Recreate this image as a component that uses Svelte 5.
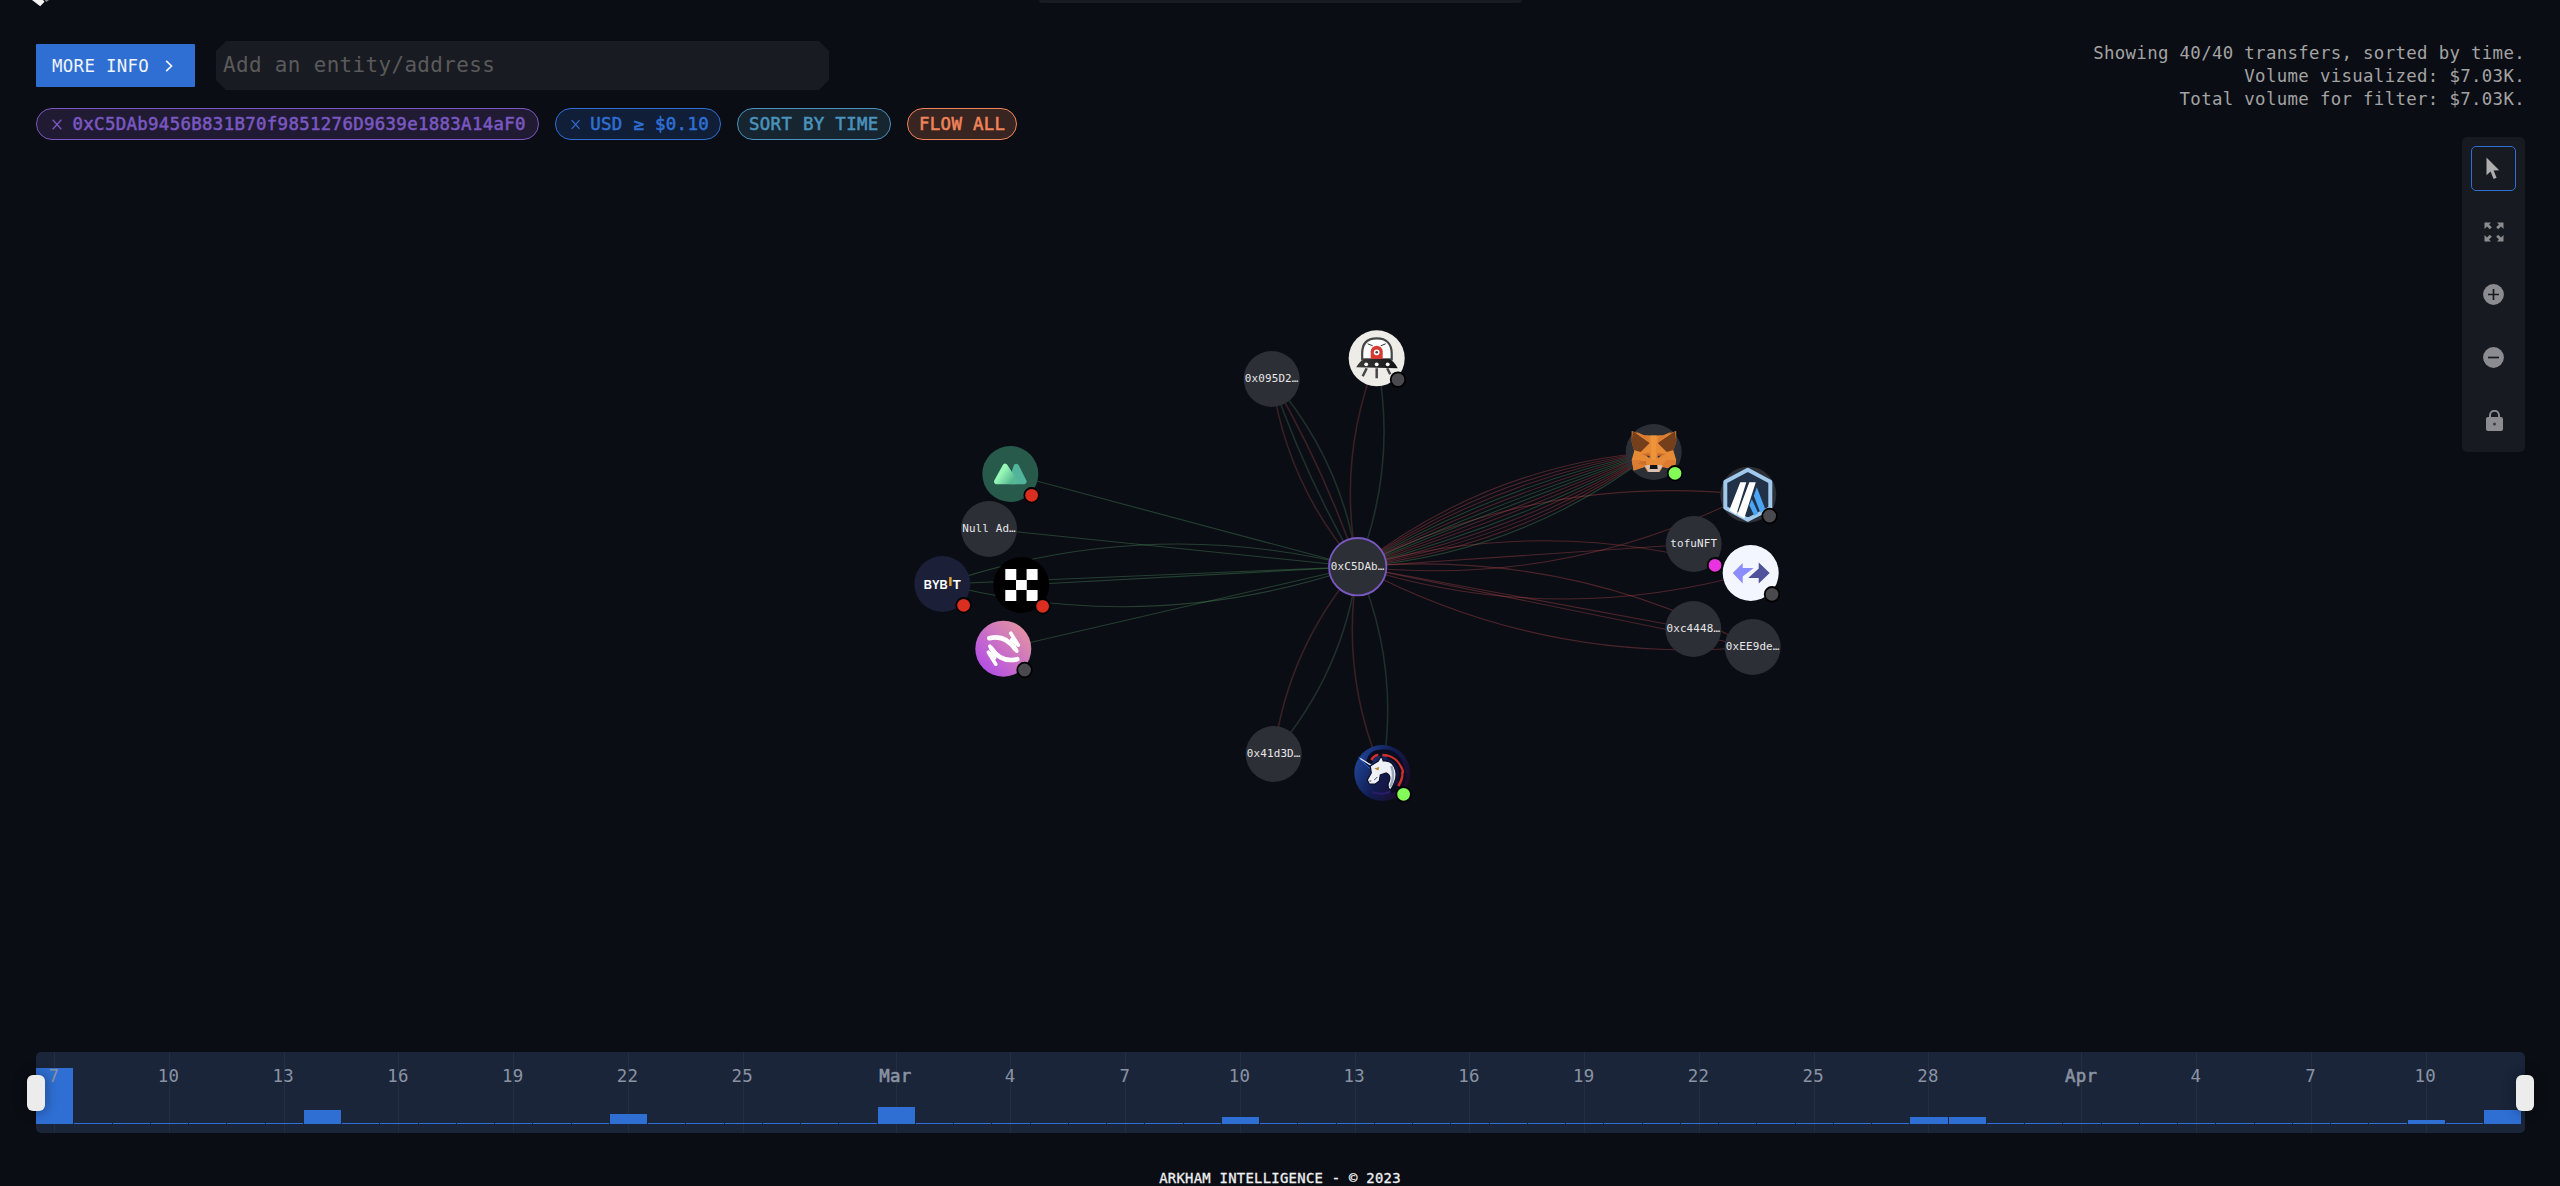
<script>
  const hub = { x: 1357.7, y: 566.7 };

  // Each edge list is ordered from one side of the fan to the other.
  const nodes = [
    { id: 'mountain', x: 1010.3, y: 474, fill: '#275a4b', edges: 'g', dot: '#d92e20' },
    { id: 'null', x: 989, y: 529, label: 'Null Ad…', edges: 'g' },
    { id: 'bybit', x: 942.3, y: 584, fill: '#1b1f38', edges: 'ggg', dot: '#d92e20' },
    { id: 'okx', x: 1021.3, y: 585, fill: '#000', edges: 'g', dot: '#d92e20' },
    { id: 'swirl', x: 1003.3, y: 648.7, fill: 'url(#swirl)', edges: 'g', dot: '#4a4a4e' },
    { id: 'a095', x: 1271.7, y: 379, label: '0x095D2…', edges: 'rgrg', steep: true },
    { id: 'ufo', x: 1376.7, y: 358.3, fill: '#edece6', edges: 'rg', steep: true, dot: '#4a4a4e' },
    { id: 'a41d', x: 1273.7, y: 754, label: '0x41d3D…', edges: 'gr', steep: true },
    { id: 'unicorn', x: 1382.3, y: 773, fill: 'url(#night)', edges: 'gr', steep: true, dot: '#83fb58' },
    { id: 'fox', x: 1653.7, y: 452, edges: 'rrrgrggrrgrrrg', dot: '#83fb58' },
    { id: 'arb', x: 1748.3, y: 494.7, edges: 'rr', dot: '#4a4a4e' },
    { id: 'tofu', x: 1693.7, y: 544, label: 'tofuNFT', edges: 'r', dot: '#ea33e0' },
    { id: 'zk', x: 1750.7, y: 573, fill: '#f3f6ff', edges: 'rr', dot: '#4a4a4e' },
    { id: 'c444', x: 1693.3, y: 629, label: '0xc4448…', edges: 'r' },
    { id: 'ee9', x: 1752.7, y: 647, label: '0xEE9de…', edges: 'rrr' }
  ];

  const BEND = 0.148;
  const edges = nodes.flatMap((n) => {
    const dx = n.x - hub.x;
    const dy = n.y - hub.y;
    const count = n.edges.length;
    return [...n.edges].map((kind, i) => {
      const k = count === 1 ? 0 : BEND * (1 - (2 * i) / (count - 1));
      const cx = hub.x + dx / 2 + dy * k;
      const cy = hub.y + dy / 2 - dx * k;
      return { kind, steep: n.steep, d: `M${hub.x} ${hub.y}Q${cx.toFixed(1)} ${cy.toFixed(1)} ${n.x} ${n.y}` };
    });
  });

  const heights = { 0: 56, 7: 14, 15: 10, 22: 17, 31: 7, 49: 7, 50: 7, 62: 4, 64: 14 };
  const labels = {
    0: '7', 3: '10', 6: '13', 9: '16', 12: '19', 15: '22', 18: '25', 22: 'Mar', 25: '4', 28: '7', 31: '10',
    34: '13', 37: '16', 40: '19', 43: '22', 46: '25', 49: '28', 53: 'Apr', 56: '4', 59: '7', 62: '10'
  };
  const days = Array.from({ length: 65 }, (_, i) => ({ h: heights[i] ?? 1, label: labels[i] }));
</script>

{#snippet cross()}
  <svg class="cross" width="10" height="11" viewBox="0 0 10 11"><path d="M.7 .7 9.3 10.3M9.3 .7.7 10.3" /></svg>
{/snippet}

<div class="page">
  <svg class="graph" width="2560" height="1186" viewBox="0 0 2560 1186">
    <defs>
      <linearGradient id="swirl" x1="0.1" y1="0.9" x2="0.85" y2="0.15">
        <stop offset="0" stop-color="#b24ce8" /><stop offset="1" stop-color="#e090a6" />
      </linearGradient>
      <linearGradient id="night" x1="0" y1="0.2" x2="1" y2="0.7">
        <stop offset="0" stop-color="#21479c" /><stop offset="0.5" stop-color="#111d52" /><stop offset="1" stop-color="#1c0a26" />
      </linearGradient>
      <linearGradient id="peak" x1="0.35" y1="0.3" x2="1" y2="0.7">
        <stop offset="0" stop-color="#96f7b6" /><stop offset="1" stop-color="#57b894" />
      </linearGradient>
      <linearGradient id="saucer"><stop offset="0" stop-color="#3b3b3b" /><stop offset="1" stop-color="#111" /></linearGradient>
    </defs>

    {#each edges as e}
      <path class="edge {e.kind}" class:steep={e.steep} d={e.d} />
    {/each}

    {#each nodes as n (n.id)}
      <g transform="translate({n.x} {n.y})">
        <circle r="28" fill={n.fill ?? '#2d2f37'} />
        {#if n.id === 'mountain'}
          <path d="M1 7.500 6 -7.500 13.500 7.500Z" fill="#52b49a" stroke="#52b49a" stroke-width="5.500" stroke-linejoin="round" />
          <path d="M-13.500 7.500-5.200-7.500 4.500 7.500Z" fill="url(#peak)" stroke="url(#peak)" stroke-width="5.500" stroke-linejoin="round" />
        {:else if n.id === 'bybit'}
          <text class="brand" x="-18.500" y="5" textLength="24" lengthAdjust="spacingAndGlyphs">BYB</text>
          <path d="M6.900-7h2.400v9h-2.400z" fill="#f0a92e" />
          <text class="brand" x="10.500" y="5" textLength="8" lengthAdjust="spacingAndGlyphs">T</text>
        {:else if n.id === 'okx'}
          <path d="M-16-16h11v11h-11zM5.300-16h11v11h-11zM-5.300-5h10.800v10h-10.800zM-16 5h11v11h-11zM5.300 5h11v11h-11z" fill="#fff" />
        {:else if n.id === 'swirl'}
          {#each [0, 180] as turn}
            <g transform="rotate({turn})">
              <path d="M-14-10.500C-4-13 5-10 12 .5" fill="none" stroke="#fff" stroke-width="4.600" stroke-linecap="round" />
              <path d="M7.500-15.500 15-3.500M11-2 13.500 2.500M8.500-9 13-5" fill="none" stroke="#fff" stroke-width="3.600" stroke-linecap="round" />
            </g>
          {/each}
        {:else if n.id === 'ufo'}
          <path d="M-14.500 1V-5C-14.500-14-10-20 0-20S15-14 15-5V1z" fill="#fff" stroke="#444648" stroke-width="2.200" />
          <path d="M-9-14.500l5 2M9-14.500l-5 2" stroke="#333" stroke-width="1" />
          <path d="M-6 1V-7a6 5.500 0 0 1 12 0V1z" fill="#d63a33" />
          <circle cy="-6" r="2.900" fill="#fff" /><circle cy="-6" r="1.300" fill="#444" />
          <path d="M-10 10-14 18M0 10V20M10.500 10 13.500 16" stroke="#454748" stroke-width="2.500" />
          <path d="M-20.500 9Q-16 1-11 .6H12Q17 2 21 10Z" fill="url(#saucer)" />
          <g fill="#fff"><circle cx="-10.500" cy="6" r="1.900" /><circle cy="6" r="1.900" /><circle cx="11" cy="6" r="1.900" /></g>
        {:else if n.id === 'unicorn'}
          <path d="M-10 19Q4 24 14 14" fill="none" stroke="#2a1d6b" stroke-width="2" />
          <path d="M-13-10Q-12-21 2-20.500T19-4Q23 6 17 13L8 18" fill="none" stroke="#0a0d20" stroke-width="6" />
          <path d="M-23.500-15.500-10-7-13-5Z" fill="#0c1330" stroke="#2f6fe0" stroke-width="1" />
          <path d="M-22-14.500-11-7.500" stroke="#e8ecf5" stroke-width="1.200" />
          <path d="M-11-13Q-8-18-4-18M0-18Q10-18 16-10T20 0Q20 7 16 13" fill="none" stroke="#cf2f2b" stroke-width="2.600" />
          <path d="M5-15.500Q18-11 18 2L16 8" fill="none" stroke="#0a0d20" stroke-width="2" />
          <path d="M-12-7-4-12-1-17 1-12Q9-13 12-6 17 4 8 17 4 14 7 8 9 2 4 0L-2 2-3 8-7 11-13 11-15 7-11 0Z" fill="#eef1f7" stroke="#0c1026" stroke-width="1.200" />
          <path d="M9-7Q13 3 8 14" fill="none" stroke="#9aa6bd" stroke-width="2.400" />
          <path d="M-8-4.500-3-6-4-2.500Z" fill="#b08a26" /><path d="M-13 8h2M-8 7l3-3" stroke="#444b60" />
        {:else if n.id === 'fox'}
          <path d="M-22-21-10-16.500H10L22.500-21 22.500-10 19.500-2 22.500 8 21 17.500 9 15 6 20H-6L-9 15-20 18.500-22 8-19.500-1-22-10Z" fill="#e68a35" />
          <path d="M-21-21-4-9-13 0-20-2-22-10ZM21.500-21 4-9 13 0 20-2 22.500-10Z" fill="#743f1a" />
          <path d="M-18-20.500-4-9-5-16.500H-9ZM18-20.500 4-9 5-16.500H9ZM-22 8-13 8-7 14-20 18.500ZM22 8 13 8 7 14 21 17.500Z" fill="#dc7c32" />
          <path d="M-12 2-4 1-3 6ZM12 2 4 1 3 6ZM-12 9-8 9-7 13-16 12Z" fill="#cd6f2d" />
          <path d="M-3-16.500H3L2 8H-2Z" fill="#ee953c" />
          <path d="M-9 13.500-4 13H4L9 13.500 5 20H-5Z" fill="#d8c2b5" />
          <path d="M-7.500 3.500-4 4-4.500 6ZM7.500 3.500 4 4 4.500 6Z" fill="#27343f" />
          <path d="M-3.500 13H3.500L4 17H-4Z" fill="#141414" />
        {:else if n.id === 'arb'}
          <path d="M-.5-25 22-13V13.500L-.5 25-23 13V-13Z" fill="#213147" stroke="#a0c9ec" stroke-width="4" stroke-linejoin="round" />
          <path d="M-8-12.500h6L-12 20-19 15.500ZM1-12.500h6.500L-4 23.500-11 20Z" fill="#fff" />
          <path d="M8.500-7.500 17 14.500 12 18 5.500 1ZM3.500 4.500 10 18.500 6 21 1 10.500Z" fill="#4aa5f5" />
        {:else if n.id === 'zk'}
          <path d="M-18 0-8-10V-5H3L-8 3.500V10.500Z" fill="#8c8dfc" />
          <path d="M19 0 8-10.500V-4.500L-2.500 5H8V10.500Z" fill="#4e529a" />
        {/if}
        {#if n.label}<text class="name" y="3.300">{n.label}</text>{/if}
        {#if n.dot}<circle cx="21.300" cy="21.300" r="7.300" fill={n.dot} stroke="#000" stroke-width="1.800" />{/if}
      </g>
    {/each}

    <g transform="translate({hub.x} {hub.y})">
      <circle r="28.700" fill="#2d2f37" stroke="#7a58c1" stroke-width="1.800" />
      <text class="name" y="3">0xC5DAb…</text>
    </g>
  </svg>

  <nav>
    <svg class="logo" width="18" height="7" viewBox="0 0 18 7"><path d="M0 0h11l1.500 1.800L8.200 6.300z" /><path d="M12.500 0H17l-2.600 2z" opacity=".55" /></svg>
    <div class="search-edge"></div>
  </nav>

  <header>
    <div class="filters">
      <div class="controls">
        <button class="more">MORE INFO<svg width="8" height="12" viewBox="0 0 8 12"><path d="M1.200 .8 6.500 6 1.200 11.200" /></svg></button>
        <div class="entity">Add an entity/address</div>
      </div>
      <div class="pills">
        <span class="pill purple">{@render cross()}0xC5DAb9456B831B70f9851276D9639e1883A14aF0</span>
        <span class="pill blue">{@render cross()}USD ≥ $0.10</span>
        <span class="pill teal">SORT BY TIME</span>
        <span class="pill orange">FLOW ALL</span>
      </div>
    </div>
    <div class="status">
      <p>Showing 40/40 transfers, sorted by time.</p>
      <p>Volume visualized: $7.03K.</p>
      <p>Total volume for filter: $7.03K.</p>
      <div class="tools">
        <button class="tool active"><svg width="14" height="23" viewBox="0 0 14 23"><path d="M.5 .5V18.200L4.600 14.600 7.600 22 10.600 20.800 7.600 13.600 13.200 13.200Z" /></svg></button>
        <button class="tool"><svg width="20" height="20" viewBox="0 0 20 20"><path d="M.5 .5H7L5 2.500 7.800 5.300 5.800 7.300 3 4.500.5 7ZM19.500 .5H13L15 2.500 12.200 5.300 14.200 7.300 17 4.500 19.500 7ZM.5 19.500H7L5 17.500 7.800 14.700 5.800 12.700 3 15.500.5 13ZM19.500 19.500H13L15 17.500 12.200 14.700 14.200 12.700 17 15.500 19.500 13Z" /></svg></button>
        <button class="tool"><svg width="21" height="21" viewBox="0 0 21 21"><circle cx="10.500" cy="10.500" r="10.400" /><path class="cut" d="M5 10.500H16M10.500 5V16" /></svg></button>
        <button class="tool"><svg width="21" height="21" viewBox="0 0 21 21"><circle cx="10.500" cy="10.500" r="10.400" /><path class="cut" d="M5 10.500H16" /></svg></button>
        <button class="tool lock"><svg width="17" height="21" viewBox="0 0 17 21"><path class="shackle" d="M4 8V5.500a4.500 4.700 0 0 1 9 0V8" /><rect y="7" width="17" height="14" rx="2" /><circle class="hole" cx="8.500" cy="14" r="1.600" /></svg></button>
      </div>
    </div>
  </header>

  <section class="timeline">
    {#each days as day}
      <div class="day" class:tick={day.label}>
        <div class="bar" style="height: {day.h}px"></div>
        {#if day.label}<span class:month={day.label.length > 2}>{day.label}</span>{/if}
      </div>
    {/each}
    <i class="handle left"></i>
    <i class="handle right"></i>
  </section>

  <footer>ARKHAM INTELLIGENCE - © 2023</footer>
</div>

<style>
  :global(body) { background: #0a0d14; overflow: hidden; }
  .page {
    position: relative; width: 2560px; height: 1186px; overflow: hidden;
    display: flex; flex-direction: column; background: #0a0d14;
    font: 17.4px/23px "DejaVu Sans Mono", "Liberation Mono", monospace; color: #a3a3a3;
    letter-spacing: 0.325px;
  }
  button { font: inherit; letter-spacing: inherit; border: 0; margin: 0; background: none; }
  .graph { position: absolute; inset: 0; }
  .edge { fill: none; stroke-width: 1.1; }
  .edge.r { stroke: rgba(200, 80, 82, 0.35); }
  .edge.g { stroke: rgba(85, 155, 100, 0.36); }
  .edge.steep { stroke-width: 1.6; }
  .edge.steep.r { stroke: #3a2025; }
  .edge.steep.g { stroke: #1f302a; }
  .name { font-size: 10.9px; letter-spacing: 0.15px; fill: #e8e8e8; text-anchor: middle; }
  .brand { font: bold 13.5px "Liberation Sans", sans-serif; letter-spacing: 0; fill: #fff; }

  nav { flex: 0 0 7px; display: grid; grid-template-columns: 1fr 483px 1fr; position: relative; }
  .logo { margin-left: 32px; fill: #f3f3f3; }
  .search-edge { height: 3px; background: #191b22; border-radius: 0 0 3px 3px; }

  header { position: relative; display: flex; justify-content: space-between; padding: 34px 35px 0 36px; }
  .controls { display: flex; align-items: center; gap: 21px; height: 49px; }
  .more {
    box-sizing: border-box; width: 159px; height: 43px; padding: 1px 0 0 16px;
    display: flex; align-items: center; gap: 16px;
    background: #2f6fd4; color: #f2f5fa; border-radius: 1px;
  }
  .more svg { fill: none; stroke: #f2f5fa; stroke-width: 1.7; }
  .entity {
    width: 613px; height: 49px; box-sizing: border-box; padding-left: 7px; background: #191b22; color: #5a5a5a;
    font-size: 20.9px; letter-spacing: 0.38px; line-height: 49px;
    clip-path: polygon(10px 0, 603px 0, 100% 10px, 100% 39px, 603px 100%, 10px 100%, 0 39px, 0 10px);
  }
  .pills { display: flex; gap: 16px; margin-top: 18px; }
  .pill {
    box-sizing: border-box; height: 32px; padding: 1px 11px 0; border: 1px solid; border-radius: 16px;
    display: flex; align-items: center; white-space: pre; -webkit-text-stroke: 0.55px currentColor;
  }
  .cross { margin: 0 10.5px 0 4px; fill: none; stroke: currentColor; stroke-width: 1.3; }
  .purple { width: 502.5px; color: #7a58c1; background: #201a32; }
  .blue { width: 166.5px; color: #2f6fd4; background: #111e38; }
  .teal { width: 154px; color: #4a93bd; background: #172530; }
  .orange { width: 110px; color: #f0845a; background: #382420; }

  .status { display: flex; flex-direction: column; align-items: flex-end; padding-top: 1px; }
  .status p { margin: 0; }
  .tools {
    width: 63px; margin-top: 26px; display: grid; grid-auto-rows: 63px; place-items: center;
    background: #171a20; border-radius: 5px;
  }
  .tool {
    box-sizing: border-box; width: 45px; height: 45px; padding: 0;
    display: grid; place-items: center; border: 1px solid transparent; border-radius: 5px; fill: #8b8c90;
  }
  .tool.active { border-color: #2f6fd4; fill: #aeaeae; padding-right: 1px; }
  .lock { padding-left: 1px; }
  .cut { fill: none; stroke: #171a20; stroke-width: 1.7; }
  .shackle { fill: none; stroke: #8b8c90; stroke-width: 2; }
  .hole { fill: #3f4146; }

  .timeline {
    position: relative; display: flex; box-sizing: border-box; width: 2489px; height: 81px;
    margin: auto 0 0 36px; padding-right: 3px; background: #1a253a; border-radius: 5px;
  }
  .day {
    flex: 1; display: grid; grid-template: 72px 9px / 100%; align-items: end; justify-items: center;
    padding-right: 1px; min-width: 0;
    background: linear-gradient(#232e40, #232e40) no-repeat calc(50% - 0.6px) / 0 100%;
  }
  .tick { background-size: 1px 100%; }
  .bar { grid-area: 1 / 1; width: 100%; background: #2f6fd4; }
  .day span { grid-area: 1 / 1; align-self: start; margin: 13px 1.5px 0 0; color: #8a93a3; white-space: nowrap; }
  .day .month { -webkit-text-stroke: 0.6px currentColor; }
  .handle {
    position: absolute; top: 23px; width: 18px; height: 36px; background: #ececec; border-radius: 6px;
    box-shadow: 0 0 12px 2px rgba(0, 0, 0, 0.3);
  }
  .left { left: -9px; }
  .right { right: -9px; }

  footer {
    position: relative; height: 16px; margin-top: 37px; font-size: 13.9px; line-height: 16px;
    letter-spacing: 0.27px; text-align: center; color: #f0f0f0; -webkit-text-stroke: 0.3px currentColor;
  }
</style>
